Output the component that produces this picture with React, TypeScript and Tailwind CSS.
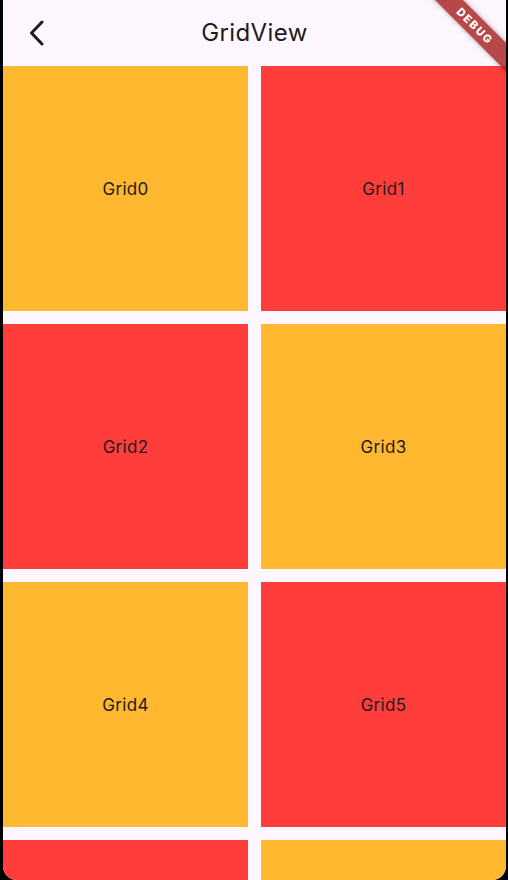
import React from 'react';

const tiles = Array.from({ length: 8 }, (_, i) => i);

const DebugBanner: React.FC = () => (
  <div className="pointer-events-none absolute right-0 top-0 h-[90px] w-[90px] overflow-hidden">
    <div className="absolute left-[-1px] top-[16px] flex h-[20px] w-[120px] rotate-45 items-center justify-center bg-[#a51c1c]/[0.8] shadow-[0_0_5px_rgba(0,0,0,0.35)]">
      <span className="text-[11px] font-extrabold tracking-[1.6px] text-white [font-family:Inter,'Liberation_Sans',sans-serif]">
        DEBUG
      </span>
    </div>
  </div>
);

export default function App() {
  return (
    <div className="flex h-[880px] w-[508px] overflow-hidden bg-black">
      <div className="relative ml-[3px] flex h-[880px] w-[503px] flex-col overflow-hidden rounded-b-[14px] bg-[#fef7ff] [font-family:Inter,'Liberation_Sans',sans-serif]">
        {/* App bar */}
        <div className="flex h-[66px] shrink-0 items-center">
          <div className="flex w-[66px] items-center justify-center pl-[2px]">
            <svg width="16" height="26" viewBox="0 0 16 26" fill="none">
              <polyline
                points="13,2 2.5,13 13,24"
                stroke="#1d1b20"
                strokeWidth="3"
                strokeLinecap="round"
                strokeLinejoin="round"
              />
            </svg>
          </div>
          <div className="flex-1 pr-[66px] pb-[1px] text-center text-[24px] tracking-[0.4px] text-[#1d1b20]">GridView</div>
        </div>

        {/* Grid */}
        <div className="grid grid-cols-2 gap-[13px]">
          {tiles.map((i) => {
            const amber = (Math.floor(i / 2) + (i % 2)) % 2 === 0;
            return (
              <div
                key={i}
                className={
                  amber
                    ? 'flex h-[245px] items-center justify-center bg-[#ffb830] pt-[3px]'
                    : 'flex h-[245px] items-center justify-center bg-[#ff3d3a] pt-[3px]'
                }
              >
                <span className="text-[17px] tracking-[0.3px] text-[#1d1b20]">Grid{i}</span>
              </div>
            );
          })}
        </div>

        <DebugBanner />
      </div>
    </div>
  );
}
